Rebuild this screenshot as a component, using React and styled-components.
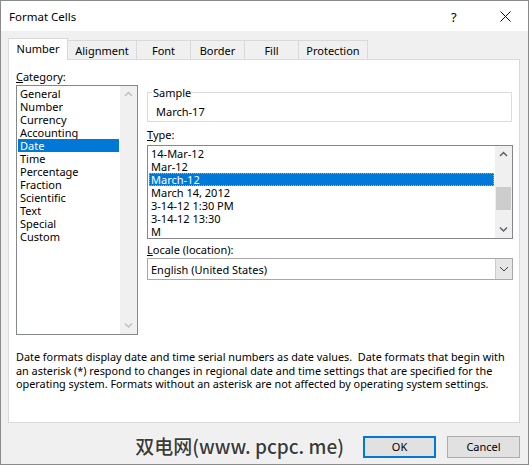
import styled, { createGlobalStyle } from "styled-components";

const GlobalStyle = createGlobalStyle`
  html, body { margin: 0; padding: 0; background: #fff; }
  body {
    font-family: "Segoe UI", "Noto Sans", sans-serif;
    font-size: 11px;
    color: #000;
  }
  * { box-sizing: border-box; }
`;

const categories = [
  "General", "Number", "Currency", "Accounting", "Date", "Time",
  "Percentage", "Fraction", "Scientific", "Text", "Special", "Custom",
];

const types = [
  "14-Mar-12", "Mar-12", "March-12", "March 14, 2012",
  "3-14-12 1:30 PM", "3-14-12 13:30", "M",
];

const tabs = [
  ["Number", 60], ["Alignment", 70], ["Font", 55],
  ["Border", 55], ["Fill", 55], ["Protection", 70],
];

function Chevron({ dir, color }) {
  const d = dir === "up" ? "M1 5 L4.5 1.5 L8 5" : "M1 1.5 L4.5 5 L8 1.5";
  return (
    <svg width="9" height="7" viewBox="0 0 9 7">
      <path d={d} fill="none" stroke={color} strokeWidth="1.5" />
    </svg>
  );
}

function ScrollBar({ disabled, thumbTop, thumbHeight }) {
  const color = disabled ? "#c0c0c0" : "#606060";
  return (
    <Track>
      <ArrowBox><Chevron dir="up" color={color} /></ArrowBox>
      <Rail>
        {thumbHeight ? <Thumb $top={thumbTop} $height={thumbHeight} /> : null}
      </Rail>
      <ArrowBox><Chevron dir="down" color={color} /></ArrowBox>
    </Track>
  );
}

export default function App() {
  return (
    <>
      <GlobalStyle />
      <Window>
        <TitleBar>
          <TitleText>Format Cells</TitleText>
          <HelpMark>?</HelpMark>
          <CloseBox>
            <svg width="11" height="11" viewBox="0 0 11 11">
              <path d="M0.5 0.5 L10.5 10.5 M10.5 0.5 L0.5 10.5" stroke="#111" strokeWidth="1" />
            </svg>
          </CloseBox>
        </TitleBar>

        <Body>
          <TabRow>
            {tabs.map(([name, w], i) => (
              <Tab key={name} $active={i === 0} $width={w} $first={i === 0}>
                {name}
              </Tab>
            ))}
          </TabRow>

          <Panel>
            <Columns>
              <LeftColumn>
                <Label><u>C</u>ategory:</Label>
                <CategoryList>
                  <Rows>
                    {categories.map((c) => (
                      <Row key={c} $selected={c === "Date"}>{c}</Row>
                    ))}
                  </Rows>
                  <ScrollBar disabled />
                </CategoryList>
              </LeftColumn>

              <RightColumn>
                <SampleGroup>
                  <Legend>Sample</Legend>
                  <SampleValue>March-17</SampleValue>
                </SampleGroup>

                <Label $gap={6}><u>T</u>ype:</Label>
                <TypeList>
                  <Rows>
                    {types.map((t) => (
                      <Row key={t} $selected={t === "March-12"} $focus={t === "March-12"}>
                        {t}
                      </Row>
                    ))}
                  </Rows>
                  <ScrollBar thumbTop={24} thumbHeight={23} />
                </TypeList>

                <Label $gap={4}><u>L</u>ocale (location):</Label>
                <Combo>
                  <ComboText>English (United States)</ComboText>
                  <ComboButton>
                    <svg width="10" height="6" viewBox="0 0 10 6">
                      <path d="M1 1 L5 5 L9 1" fill="none" stroke="#444" strokeWidth="1" />
                    </svg>
                  </ComboButton>
                </Combo>
              </RightColumn>
            </Columns>

            <Description>
              Date formats display date and time serial numbers as date values.&nbsp; Date formats that begin with
              <br />
              an asterisk (*) respond to changes in regional date and time settings that are specified for the
              <br />
              operating system. Formats without an asterisk are not affected by operating system settings.
            </Description>
          </Panel>

          <Footer>
            <Watermark>双电网(www. pcpc. me)</Watermark>
            <Button $default>OK</Button>
            <Button>Cancel</Button>
          </Footer>
        </Body>
      </Window>
    </>
  );
}

const Window = styled.div`
  width: 529px;
  height: 465px;
  border: 1px solid #8a8a8a;
  background: #f0f0f0;
  display: flex;
  flex-direction: column;
`;

const TitleBar = styled.div`
  height: 30px;
  background: #fff;
  display: flex;
  align-items: center;
  padding: 1px 0 0 8px;
`;

const TitleText = styled.div`
  font-size: 11.5px;
  flex: 1;
`;

const HelpMark = styled.div`
  font-size: 13px;
  width: 12px;
  margin-right: 37px;
`;

const CloseBox = styled.div`
  width: 11px;
  height: 11px;
  margin-right: 17px;
  display: flex;
`;

const Body = styled.div`
  flex: 1;
  display: flex;
  flex-direction: column;
  padding: 7px 8px 0 7px;
`;

const TabRow = styled.div`
  height: 21px;
  display: flex;
  align-items: flex-end;
`;

const Tab = styled.div`
  position: relative;
  width: ${(p) => p.$width}px;
  height: ${(p) => (p.$active ? 22 : 19)}px;
  margin-left: ${(p) => (p.$first ? 0 : -1)}px;
  margin-bottom: ${(p) => (p.$active ? -1 : 0)}px;
  z-index: ${(p) => (p.$active ? 2 : 1)};
  background: ${(p) => (p.$active ? "#fff" : "#f0f0f0")};
  border: 1px solid #d9d9d9;
  border-bottom: none;
  display: flex;
  justify-content: center;
  align-items: center;
  padding-bottom: ${(p) => (p.$active ? 2 : 0)}px;
`;

const Panel = styled.div`
  height: 364px;
  background: #fff;
  border: 1px solid #d9d9d9;
  padding: 10px 6px 0 7px;
  display: flex;
  flex-direction: column;
`;

const Columns = styled.div`
  display: grid;
  grid-template-columns: 122px 366px;
  column-gap: 9px;
  align-items: start;
`;

const LeftColumn = styled.div`
  display: flex;
  flex-direction: column;
`;

const RightColumn = styled.div`
  display: flex;
  flex-direction: column;
  padding-top: 16px;
`;

const Label = styled.div`
  line-height: 13px;
  margin-top: ${(p) => p.$gap || 0}px;
  margin-bottom: 2px;
  u { text-underline-offset: 1px; }
`;

const ListBox = styled.div`
  border: 1px solid #828790;
  background: #fff;
  display: flex;
  padding: 0 0 0 1px;
  overflow: hidden;
  & > div:first-child { padding-top: 1px; }
`;

const CategoryList = styled(ListBox)`
  height: 250px;
`;

const TypeList = styled(ListBox)`
  height: 94px;
  margin-top: 2px;
`;

const Rows = styled.div`
  flex: 1;
  display: flex;
  flex-direction: column;
  margin-right: 1px;
  overflow: hidden;
`;

const Row = styled.div`
  height: 13px;
  line-height: 13px;
  flex-shrink: 0;
  padding-left: 2px;
  white-space: nowrap;
  background: ${(p) => (p.$selected ? "#0078d7" : "transparent")};
  color: ${(p) => (p.$selected ? "#fff" : "#000")};
  outline: ${(p) => (p.$focus ? "1px dotted #f3a33a" : "none")};
  outline-offset: -1px;
`;

const Track = styled.div`
  width: 17px;
  flex-shrink: 0;
  background: #f0f0f0;
  display: flex;
  flex-direction: column;
`;

const ArrowBox = styled.div`
  height: 17px;
  display: flex;
  align-items: center;
  justify-content: center;
`;

const Rail = styled.div`
  flex: 1;
`;

const Thumb = styled.div`
  margin: ${(p) => p.$top}px 1px 0;
  height: ${(p) => p.$height}px;
  background: #cdcdcd;
`;

const SampleGroup = styled.fieldset`
  margin: 0;
  min-inline-size: 0;
  border: 1px solid #dcdcdc;
  padding: 6px 8px 3px 8px;
  width: 365px;
`;

const Legend = styled.legend`
  padding: 0 1px;
  margin-left: -4px;
  line-height: 13px;
`;

const SampleValue = styled.div`
  line-height: 13px;
`;

const Combo = styled.div`
  height: 22px;
  border: 1px solid #a8a8a8;
  background: #fff;
  display: flex;
  align-items: stretch;
`;

const ComboText = styled.div`
  flex: 1;
  display: flex;
  align-items: center;
  padding-left: 3px;
`;

const ComboButton = styled.div`
  width: 17px;
  background: #e6e6e6;
  border-left: 1px solid #cccccc;
  display: flex;
  align-items: center;
  justify-content: center;
`;

const Description = styled.div`
  margin-top: 15px;
  font-size: 10.85px;
  line-height: 13.5px;
  white-space: nowrap;
`;

const Footer = styled.div`
  display: flex;
  align-items: center;
  justify-content: flex-end;
  gap: 11px;
  margin-top: 11px;
`;

const Watermark = styled.div`
  font-family: "Noto Sans CJK SC", "Noto Sans", sans-serif;
  font-size: 19px;
  font-weight: 500;
  color: #3a3a3a;
  margin-right: 8px;
  margin-top: -2px;
  text-shadow: 0 0 2px #fff, 0 0 1px #fff;
`;

const Button = styled.div`
  width: 73px;
  height: 22px;
  background: #e1e1e1;
  border: ${(p) => (p.$default ? "2px solid #0078d7" : "1px solid #adadad")};
  display: flex;
  align-items: center;
  justify-content: center;
`;
